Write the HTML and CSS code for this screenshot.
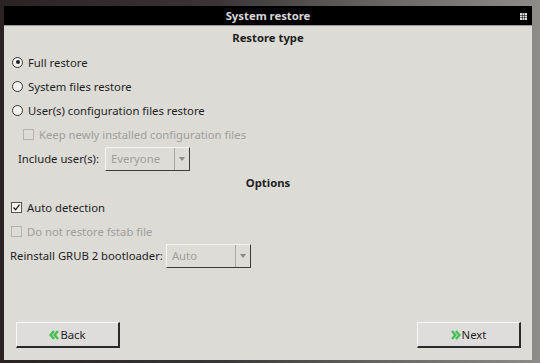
FILE: index.html
```html
<!DOCTYPE html>
<html lang="en">
<head>
  <meta charset="UTF-8">
  <title>System restore</title>
  <link rel="stylesheet" href="styles.css">
</head>
<body>
  <div class="window">
    <div class="titlebar">
      <span class="title">System restore</span>
      <svg class="grip" width="7" height="7" viewBox="0 0 7 7">
        <rect x="0" y="0" width="2" height="2" fill="#ddd"/>
        <rect x="2.5" y="0" width="2" height="2" fill="#ddd"/>
        <rect x="5" y="0" width="2" height="2" fill="#ddd"/>
        <rect x="0" y="2.5" width="2" height="2" fill="#ddd"/>
        <rect x="2.5" y="2.5" width="2" height="2" fill="#ddd"/>
        <rect x="5" y="2.5" width="2" height="2" fill="#ddd"/>
        <rect x="0" y="5" width="2" height="2" fill="#ddd"/>
        <rect x="2.5" y="5" width="2" height="2" fill="#ddd"/>
        <rect x="5" y="5" width="2" height="2" fill="#ddd"/>
      </svg>
    </div>

    <div class="content">
      <div class="section-title">Restore type</div>

      <div class="row indent-radio"><span class="radio checked"></span>Full restore</div>
      <div class="row indent-radio"><span class="radio"></span>System files restore</div>
      <div class="row indent-radio"><span class="radio"></span>User(s) configuration files restore</div>
      <div class="row sub-check disabled"><span class="check"></span>Keep newly installed configuration files</div>
      <div class="row combo-row sub-combo">
        <span>Include user(s):</span>
        <div class="combo"><span class="combo-value">Everyone</span><span class="combo-arrow"></span></div>
      </div>

      <div class="section-title">Options</div>

      <div class="row indent-check"><span class="check checked">
        <svg width="9" height="9" viewBox="0 0 9 9"><path d="M1.5 4.5 L3.6 6.8 L7.5 1.6" fill="none" stroke="#222" stroke-width="1.3"/></svg>
      </span>Auto detection</div>
      <div class="row indent-check disabled"><span class="check"></span>Do not restore fstab file</div>
      <div class="row combo-row grub-row">
        <span>Reinstall GRUB 2 bootloader:</span>
        <div class="combo"><span class="combo-value">Auto</span><span class="combo-arrow"></span></div>
      </div>

      <div class="spacer"></div>

      <div class="buttons">
        <button class="btn">
          <svg class="chev" width="10" height="10" viewBox="0 0 10 10">
            <polyline points="5,1 1.6,5 5,9" fill="none" stroke="#46c052" stroke-width="2.4"/>
            <polyline points="9,1 5.6,5 9,9" fill="none" stroke="#46c052" stroke-width="2.4"/>
          </svg>Back
        </button>
        <button class="btn">
          <svg class="chev" width="10" height="10" viewBox="0 0 10 10">
            <polyline points="1,1 4.4,5 1,9" fill="none" stroke="#46c052" stroke-width="2.4"/>
            <polyline points="5,1 8.4,5 5,9" fill="none" stroke="#46c052" stroke-width="2.4"/>
          </svg>Next
        </button>
      </div>
    </div>
  </div>
</body>
</html>
```

FILE: styles.css
```css
html, body {
  margin: 0;
  height: 100%;
}

body {
  background: linear-gradient(90deg, #2b2224 0%, #3a3436 40%, #6e6c68 75%, #8d8c88 100%);
  font-family: "Noto Sans", "DejaVu Sans", sans-serif;
  font-size: 11.3px;
  color: #1f1f1f;
  padding: 6px 8px 3px 4px;
  box-sizing: border-box;
}

.window {
  height: 100%;
  display: flex;
  flex-direction: column;
  background: #dcdbd6;
}

.titlebar {
  height: 19px;
  background: #000;
  display: flex;
  align-items: center;
  justify-content: center;
  position: relative;
  border-bottom: 1px solid #9a9994;
}

.title {
  color: #d8d8d8;
  font-weight: bold;
}

.grip {
  position: absolute;
  right: 5px;
  top: 7px;
}

.content {
  flex: 1;
  display: flex;
  flex-direction: column;
  padding: 0 6px;
}

.section-title {
  height: 24px;
  line-height: 24px;
  text-align: center;
  font-weight: bold;
}

.row {
  height: 24px;
  display: flex;
  align-items: center;
  white-space: nowrap;
}

.disabled {
  color: #a09f9b;
}

.indent-radio {
  padding-left: 2px;
}

.radio {
  width: 9px;
  height: 9px;
  border: 1px solid #333;
  border-radius: 50%;
  background: #f2f2ef;
  margin-right: 5px;
  display: flex;
  align-items: center;
  justify-content: center;
}

.radio.checked::after {
  content: "";
  width: 4px;
  height: 4px;
  border-radius: 50%;
  background: #222;
}

.check {
  width: 9px;
  height: 9px;
  border: 1px solid #555;
  background: #f2f2ef;
  margin-right: 5px;
  display: flex;
  align-items: center;
  justify-content: center;
}

.disabled .check {
  border-color: #b4b3ae;
  background: #dddcd7;
}

.indent-check {
  padding-left: 1px;
}

.sub-check {
  padding-left: 13px;
}

.combo-row {
  height: 25px;
}

.sub-combo {
  padding-left: 8px;
}

.combo {
  width: 83px;
  height: 22px;
  margin-left: 6px;
  display: flex;
  align-items: center;
  background: #dddcd7;
  border-top: 1px solid #f4f4f2;
  border-left: 1px solid #f4f4f2;
  border-right: 1px solid #3c3c3c;
  border-bottom: 1px solid #3c3c3c;
  color: #a09f9b;
}

.grub-row .combo {
  margin-left: 3px;
}

.combo-value {
  flex: 1;
  padding-left: 5px;
}

.combo-arrow {
  width: 14px;
  height: 100%;
  border-left: 1px solid #a8a7a2;
  display: flex;
  align-items: center;
  justify-content: center;
}

.combo-arrow::after {
  content: "";
  border-left: 3px solid transparent;
  border-right: 3px solid transparent;
  border-top: 4px solid #8a8985;
}

.spacer {
  flex: 1;
}

.buttons {
  display: flex;
  justify-content: space-between;
  padding: 0 5px 12px 6px;
}

.btn {
  width: 104px;
  height: 26px;
  font-family: inherit;
  font-size: 11.3px;
  color: #1f1f1f;
  background: #dedddb;
  border-top: 1px solid #f6f6f4;
  border-left: 1px solid #f6f6f4;
  border-right: 2px solid #2a2a2a;
  border-bottom: 2px solid #2a2a2a;
  display: flex;
  align-items: center;
  justify-content: center;
  padding: 0;
}

.chev {
  margin-right: 1px;
}
```
